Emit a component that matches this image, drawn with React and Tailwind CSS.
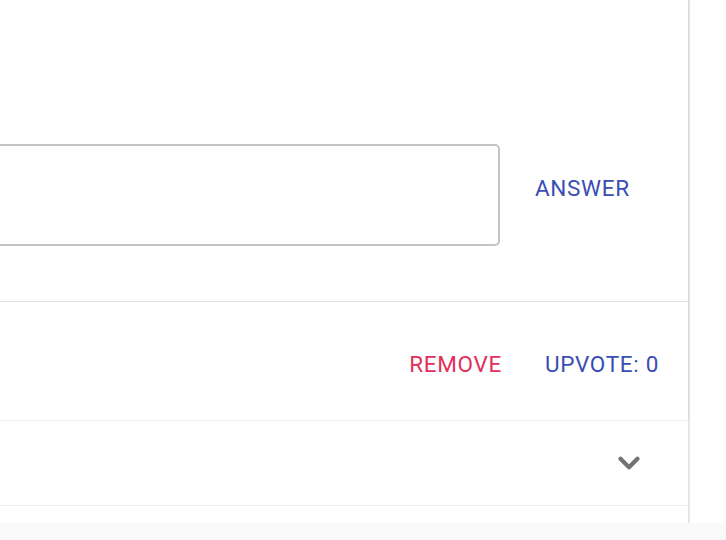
import { ChevronDown } from 'lucide-react';

export default function App() {
  return (
    <div className="w-[726px] h-[540px] flex flex-col bg-white font-['Roboto',sans-serif] overflow-hidden">
      <div className="h-[523px] flex">
        {/* Main column */}
        <div className="w-[690px] shrink-0 flex flex-col border-r-2 border-[#e6e6e6]">
          {/* Question card */}
          <div className="h-[420px] flex flex-col bg-white shadow-[0_1px_2px_rgba(0,0,0,0.15)]">
            <div className="h-[302px] flex items-start pt-[144px] border-b border-[#e0e0e0]">
              <div className="w-[500px] h-[102px] border-2 border-l-0 border-[#c4c4c4] rounded-r-[5px]" />
              <button className="ml-[35px] mt-[28px] text-[22.5px] font-normal tracking-[0.03em] text-[#3a4db3] uppercase">
                Answer
              </button>
            </div>
            <div className="flex-1 flex items-center justify-end gap-[43px] pr-[29px] pt-[7px]">
              <button className="text-[22.5px] font-normal tracking-[0.03em] text-[#e2305c] uppercase">
                Remove
              </button>
              <button className="text-[22.5px] font-normal tracking-[0.03em] text-[#3a4db3] uppercase">
                Upvote: 0
              </button>
            </div>
          </div>
          {/* Collapsed panel */}
          <div className="h-[86px] flex items-center justify-end pr-[42px] border-y border-[#ececec] bg-white">
            <ChevronDown size={34} strokeWidth={3} className="text-[#737373]" />
          </div>
        </div>
      </div>
      <div className="flex-1 bg-[#fafafa]" />
    </div>
  );
}
